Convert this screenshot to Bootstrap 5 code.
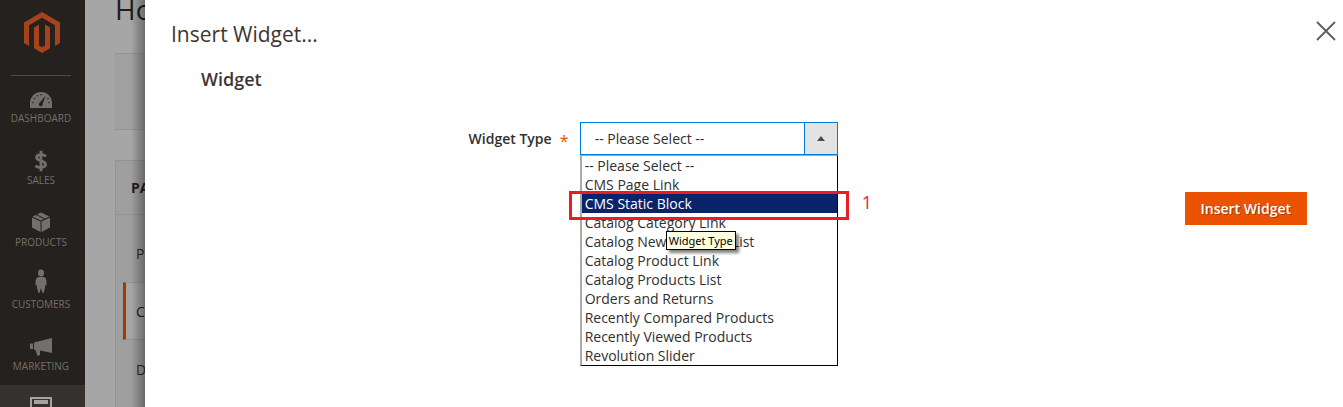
<!DOCTYPE html>
<html lang="en">
<head>
<meta charset="utf-8">
<meta name="viewport" content="width=device-width, initial-scale=1">
<title>Insert Widget</title>
<link href="https://cdn.jsdelivr.net/npm/bootstrap@5.3.0/dist/css/bootstrap.min.css" rel="stylesheet">
<style>
body{font-family:"Open Sans","Noto Sans",sans-serif;font-size:14px;line-height:19px;color:#303030;background:#fff}
/* admin menu */
.side{width:85px;background:#25211e;color:#72706c}
.side-logo{height:75px;padding:12px 2px 0 0}
.side-rule{height:1px;margin:0 14px -1px 11px;background:#4d4a47}
.side a{height:62px;padding:13px 3px 0 0;color:inherit;font-size:10px;line-height:14px;text-transform:uppercase;text-decoration:none}
.side a svg{height:22px;margin-bottom:1px;overflow:visible}
.side .current{background:#35312e;color:#a6a4a0;padding-top:11px}
/* dimmed page behind the panel */
.under{width:60px;background:#a6a6a6;color:#1f1e1d;padding-left:30px;white-space:nowrap}
.under::after{content:"";position:absolute;inset:0 0 0 auto;width:14px;background:linear-gradient(to right,rgba(0,0,0,0),rgba(0,0,0,.34))}
.under h1{font-size:28px;font-weight:400;line-height:38px;margin:-10px 0 25px}
.under-bar{height:77px;background:#a0a0a0;border:1px solid #949494;border-width:1px 0;margin-bottom:30px}
.under-nav{background:#9f9f9f;border:1px solid #949494;border-width:1px 0 0 1px}
.under-nav h2{height:54px;margin:0;padding:17px 15px;font-size:14px;line-height:19px;font-weight:700;border-bottom:1px solid #949494}
.under-nav a{display:block;height:58px;padding:20px 13px;margin-left:7px;color:#2b2a29;text-decoration:none}
.under-nav a.on{color:#1a1a1a;background:#a6a6a6;border:1px solid #949494;border-width:1px 0;border-left:3px solid #9f3a04;padding:19px 10px}
.under-list{padding:9px 0 30px}
/* slide-out panel */
.panel-head{padding:20px 7px 18px 26px}
.panel-head h2{font-size:21px;line-height:29px;color:#41362f}
.close-x{width:20px;height:24px;margin-top:-7px}
.panel h3{font-size:18px;font-weight:600;line-height:24px;margin:0 0 31px 56px;color:#41362f}
.field{padding:0 36px 0 71px}
.field label{font-weight:600}
.req{color:#eb5202;font-size:16px;font-weight:400;width:8px;padding-top:6px}
.picker{width:258px}
.picker select{height:33px;padding:0 44px 0 14px;border:1px solid #007bdb;border-radius:0;color:#303030;font-size:14px;line-height:19px;box-shadow:none;
background:linear-gradient(#007bdb,#007bdb) right 32px top/1px 100% no-repeat,linear-gradient(#e3e3e3,#e3e3e3) right/32px 100% no-repeat,#fff}
.picker .arrow{right:13px;top:14px;width:8px;height:5px}
.choices{top:33px;border:1px solid #000;border-top-color:#aaa;border-left:2px solid #aaa;background:#fff}
.choices li{padding:0 3px}
.choices .picked{background:#0a246a;color:#fff}
.ring{left:-13px;right:-12px;top:-3px;height:29px;border:3px solid #ed1c24;z-index:2}
.step{left:100%;top:-2px;margin-left:25px;color:#ed1c40;font-size:18px;line-height:20px;z-index:2}
.tip{left:84px;top:18px;height:19px;padding:0 2px;border:1px solid #000;background:#ffffe1;color:#000;font:11px/17px "Noto Sans",sans-serif;box-shadow:3px 3px 3px rgba(0,0,0,.5);z-index:3}
.go{margin:37px 36px 0 0;height:33px;padding:0 16px;border:0;border-radius:0;background:#eb5202;color:#fff;font-size:14px;font-weight:600;line-height:19px;text-shadow:1px 1px 0 rgba(0,0,0,.3)}
</style>
</head>
<body>
<div class="d-flex vh-100 overflow-hidden">
<nav class="side flex-shrink-0" aria-label="Admin menu">
<div class="side-logo text-center"><svg width="36" height="41" viewBox="0 0 36 41" fill="#a6431a"><path d="M18 0 36 10.400V31l-5 3V13.300L18 5.800 5 13.300V34l-5-3V10.400Z"/><path d="M10 15.500 15 12.500V33.500L18 35.200 21 33.500V12.500L26 15.500V36.300L18 41 10 36.300Z"/></svg></div>
<div class="side-rule"></div>
<a href="#" class="d-flex flex-column align-items-center"><svg width="22" viewBox="0 0 22 22" fill="currentColor"><path d="M0 20V15A11 11 0 0 1 22 15V20Z"/><g fill="#25211e"><path d="M15.800 7.500 12.700 15.500A2 2 0 1 1 9.800 14.500Z"/><circle cx="3" cy="14.500" r=".8"/><circle cx="4.500" cy="10.500" r=".8"/><circle cx="7.500" cy="7.800" r=".8"/><circle cx="11" cy="6.800" r=".8"/><circle cx="18" cy="10.500" r=".8"/><circle cx="19" cy="14.500" r=".8"/></g></svg>Dashboard</a>
<a href="#" class="d-flex flex-column align-items-center"><svg width="14" viewBox="0 0 14 22" fill="none" stroke="currentColor" stroke-width="2.800"><path d="M12 6.300C9 4 2.600 4 2.600 7.600 2.600 11.500 11.600 10.300 11.600 14.300 11.600 18 5 18.500 1.500 15.800M7 .8V21.300"/></svg>Sales</a>
<a href="#" class="d-flex flex-column align-items-center"><svg width="20" viewBox="0 0 20 22" fill="currentColor"><path d="M1 5.500 9.500 9.500V20L1 15.500ZM10.500 9.500 19 5.500V15.500L10.500 20ZM1.500 4.500 5 3 13 7 10 8.500ZM6 2.500 10 .5 18.500 4.500 14.200 6.500Z"/></svg>Products</a>
<a href="#" class="d-flex flex-column align-items-center"><svg width="12" viewBox="0 0 12 22" fill="currentColor"><path d="M6-4.500A3 3 0 0 1 9-1.500V-.5A3 3 0 0 1 3-.5V-1.500A3 3 0 0 1 6-4.500ZM3.500 3H8.500Q11.500 3.500 11.500 8V11.500H10V14L8.500 19H7.500L6 14 4.500 19H3.500L2 14V11.500H.5V8Q.5 3.500 3.500 3Z"/></svg>Customers</a>
<a href="#" class="d-flex flex-column align-items-center"><svg width="22" viewBox="0 0 22 22" fill="currentColor"><path d="M0 7.500H3V13H0ZM4 6.500 22 2V17L10 14.500V19L7.500 20 5.500 14H4Z"/></svg>Marketing</a>
<a href="#" class="current d-flex flex-column align-items-center" aria-label="Content"><svg width="22" viewBox="0 0 22 22" fill="none" stroke="currentColor" stroke-width="2"><path d="M1 2H21V21H1Z"/><path d="M4 6H18" stroke-width="4"/></svg></a>
</nav>
<div class="under flex-shrink-0 position-relative overflow-hidden">
<h1>Home</h1>
<div class="under-bar"></div>
<div class="under-nav"><h2>PAGE</h2><div class="under-list"><a href="#">Page</a><a href="#" class="on">Content</a><a href="#">Design</a></div></div>
</div>
<main class="panel flex-grow-1">
<div class="panel-head d-flex justify-content-between align-items-center"><h2 class="m-0 fw-normal">Insert Widget...</h2>
<button type="button" class="close-x btn p-0 border-0 d-flex align-items-center" aria-label="Close"><svg width="20" height="20" viewBox="0 0 20 20" stroke="#605b57" stroke-width="1.800"><path d="M1 1 19 19M19 1 1 19"/></svg></button></div>
<form>
<h3>Widget</h3>
<div class="field"><div class="row g-0 align-items-center">
<div class="col-4 d-flex justify-content-end align-items-center pe-2"><label for="wtype">Widget Type</label><span class="req ms-2 me-1" aria-hidden="true">*</span></div>
<div class="col-8"><div class="picker position-relative">
<select id="wtype" class="form-select"><option>-- Please Select --</option></select>
<svg class="arrow position-absolute pe-none" viewBox="0 0 8 5" fill="#514943"><path d="M0 5 4 0 8 5Z"/></svg>
<ul class="choices list-unstyled position-absolute start-0 end-0 m-0" role="listbox" aria-label="Widget Type">
<li role="option">-- Please Select --</li>
<li role="option">CMS Page Link</li>
<li role="option" aria-selected="true" class="picked position-relative">CMS Static Block<span class="ring position-absolute"></span><span class="step position-absolute">1</span></li>
<li role="option" class="position-relative">Catalog Category Link<span class="tip position-absolute text-nowrap" role="tooltip">Widget Type</span></li>
<li role="option">Catalog New Products List</li>
<li role="option">Catalog Product Link</li>
<li role="option">Catalog Products List</li>
<li role="option">Orders and Returns</li>
<li role="option">Recently Compared Products</li>
<li role="option">Recently Viewed Products</li>
<li role="option">Revolution Slider</li>
</ul></div></div>
</div></div>
<div class="d-flex justify-content-end"><button type="button" class="go btn">Insert Widget</button></div>
</form>
</main>
</div>
<script src="https://cdn.jsdelivr.net/npm/bootstrap@5.3.0/dist/js/bootstrap.bundle.min.js"></script>
</body>
</html>
